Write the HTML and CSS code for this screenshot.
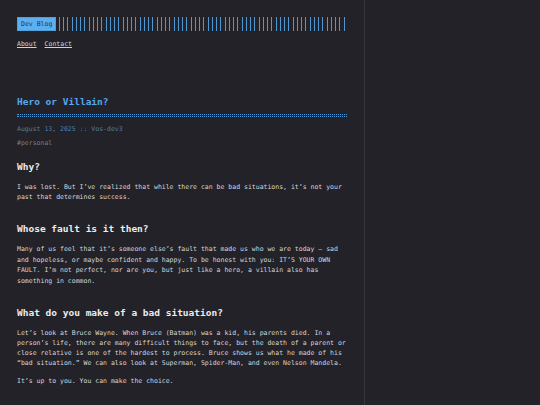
FILE: index.html
```html
<!DOCTYPE html>
<html lang="en">
<head>
<meta charset="utf-8">
<title>Hero or Villain? :: Dev Blog</title>
<link rel="stylesheet" href="styles.css">
</head>
<body>
<div class="container">
  <header class="header">
    <div class="logo-row">
      <a class="logo" href="#">Dev Blog</a>
      <span class="logo-bars"></span>
    </div>
    <nav class="menu">
      <a href="#">About</a>
      <a href="#">Contact</a>
    </nav>
  </header>
  <main class="post">
    <h1 class="post-title">Hero or Villain?</h1>
    <div class="post-rule"></div>
    <div class="post-meta">August 13, 2025 :: Vos-dev3</div>
    <div class="post-tags">#personal</div>
    <h2 class="first">Why?</h2>
    <p>I was lost. But I’ve realized that while there can be bad situations, it’s not your past that determines success.</p>
    <h2>Whose fault is it then?</h2>
    <p class="long">Many of us feel that it’s someone else’s fault that made us who we are today — sad and hopeless, or maybe confident and happy. To be honest with you: IT’S YOUR OWN FAULT. I’m not perfect, nor are you, but just like a hero, a villain also has something in common.</p>
    <h2>What do you make of a bad situation?</h2>
    <p>Let’s look at Bruce Wayne. When Bruce (Batman) was a kid, his parents died. In a person’s life, there are many difficult things to face, but the death of a parent or close relative is one of the hardest to process. Bruce shows us what he made of his “bad situation.” We can also look at Superman, Spider-Man, and even Nelson Mandela.</p>
    <p class="next">It’s up to you. You can make the choice.</p>
  </main>
</div>
</body>
</html>
```

FILE: styles.css
```css
html, body {
  margin: 0;
  padding: 0;
  background: #232228;
}
body {
  font-family: "DejaVu Sans Mono", "Liberation Mono", monospace;
  font-size: 6.5px;
  line-height: 10px;
  color: #d6d6d8;
}
.container {
  box-sizing: border-box;
  width: 365px;
  min-height: 405px;
  padding: 17px 17px 20px 17px;
  border-right: 1px solid #37363d;
}
.logo-row {
  display: flex;
  align-items: stretch;
  height: 14px;
}
.logo {
  display: block;
  background: #5cb0f0;
  color: #2a3442;
  text-decoration: none;
  padding: 0 4px;
  line-height: 14px;
  box-shadow: inset 0 0 0 1px #4f9fdc;
}
.logo-bars {
  flex: 1;
  margin: 0 2px 0 3px;
  background-image: repeating-linear-gradient(90deg, #5198d2 0, #5198d2 1px, transparent 1px, transparent 4.25px);
}
.menu {
  display: flex;
  gap: 8px;
  margin-top: 8px;
}
.menu a {
  color: #d2d2d6;
  text-decoration: underline;
  text-underline-offset: 1px;
}
.post-title {
  margin: 47px 0 0 0;
  font-size: 9.5px;
  line-height: 12px;
  font-weight: bold;
  color: #56a8ea;
}
.post-rule {
  margin-top: 6px;
  height: 1px;
  border-top: 1px dotted #4f9ad6;
  border-bottom: 1px dotted #4f9ad6;
}
.post-meta {
  margin-top: 6.5px;
  color: #4d7ea8;
}
.post-tags {
  margin-top: 4.5px;
  color: #7c7c82;
}
h2 {
  margin: 21px 0 0 0;
  font-size: 9.5px;
  line-height: 12px;
  font-weight: bold;
  color: #ececee;
}
h2.first {
  margin-top: 13px;
}
p {
  margin: 9px 0 0 0;
}
p.long {
  line-height: 10.6px;
}
p.next {
  margin-top: 8px;
}
```
